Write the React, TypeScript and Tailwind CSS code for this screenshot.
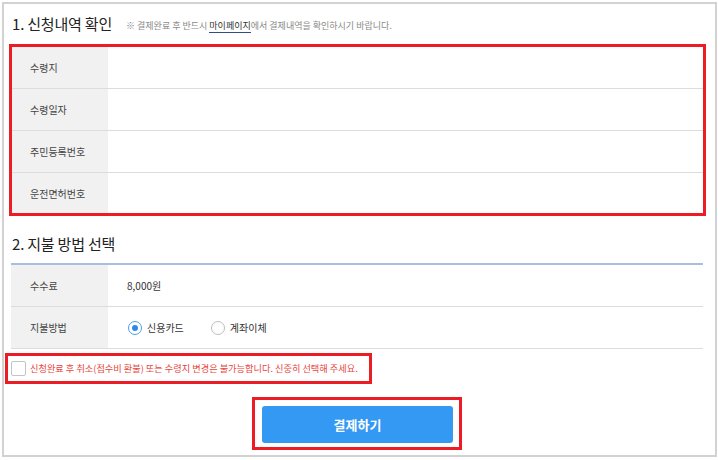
import React from "react";

const infoRows = [
    { label: "수령지", h: "h-[41px]" },
    { label: "수령일자", h: "h-[42px]" },
    { label: "주민등록번호", h: "h-[42px]" },
    { label: "운전면허번호", h: "h-[41px]" },
];

const App = () => {
    return <div className="bg-white w-[718px] h-[460px] pt-[2px] pl-[2px] font-['Noto_Sans_CJK_KR','Noto_Sans',sans-serif]">
        <div className="w-[715px] h-[455px] border-2 border-[#d2d2d2] pl-[7px] pr-[12px]">
            {/* 1. 신청내역 확인 */}
            <div className="flex items-center h-[40px] pt-[1px]">
                <h3 className="text-[15px] font-normal text-[#222] tracking-[-0.2px] ml-[1px]">1. 신청내역 확인</h3>
                <p className="ml-[14px] text-[9px] text-[#8a8a8a] mt-[2px]">
                    ※ 결제완료 후 반드시 <span className="text-[#333] border-b border-[#2f4d8a]">마이페이지</span>에서 결제내역을 확인하시기 바랍니다.
                </p>
            </div>
            <div className="ml-[-2px] mr-[-3px] border-[3px] border-[#ec1c24]">
                {infoRows.map((row, ind) => {
                    return <div key={ind} className={`flex ${row.h} ${ind > 0 ? "border-t border-[#dcdcdc]" : ""}`}>
                        <div className="w-[96px] bg-[#f1f1f1] flex items-center pl-[18px] text-[10px] text-[#444]">{row.label}</div>
                        <div className="flex-1"></div>
                    </div>
                })}
            </div>

            {/* 2. 지불 방법 선택 */}
            <div className="flex items-center h-[49px] pt-[9px] border-b-2 border-[#a9bfde]">
                <h3 className="text-[15px] font-normal text-[#222] tracking-[-0.2px] ml-[1px]">2. 지불 방법 선택</h3>
            </div>
            <div className="flex h-[42px] border-b border-[#dcdcdc]">
                <div className="w-[97px] bg-[#f1f1f1] flex items-center pl-[19px] text-[10px] text-[#444]">수수료</div>
                <div className="flex-1 flex items-center pl-[19px] text-[10px] text-[#333]">8,000원</div>
            </div>
            <div className="flex h-[42px] border-b border-[#dcdcdc]">
                <div className="w-[97px] bg-[#f1f1f1] flex items-center pl-[19px] text-[10px] text-[#444]">지불방법</div>
                <div className="flex-1 flex items-center pl-[20px] text-[10px] text-[#333]">
                    <label className="flex items-center">
                        <span className="w-[14px] h-[14px] shrink-0 rounded-full border border-[#4d9de8] flex items-center justify-center bg-white">
                            <span className="w-[6px] h-[6px] rounded-full bg-[#2d8ae8]"></span>
                        </span>
                        <span className="ml-[5px]">신용카드</span>
                    </label>
                    <label className="flex items-center ml-[27px]">
                        <span className="w-[14px] h-[14px] shrink-0 rounded-full border border-[#bdbdbd] bg-white"></span>
                        <span className="ml-[5px]">계좌이체</span>
                    </label>
                </div>
            </div>

            {/* 안내 */}
            <div className="mt-[4px] ml-[-6px] w-[367px] h-[31px] border-[3px] border-[#ec1c24] flex items-center pl-[3px]">
                <span className="w-[15px] h-[15px] shrink-0 border border-[#c4c4c4] bg-white rounded-[2px]"></span>
                <span className="ml-[4px] text-[9.2px] text-[#e8453c] whitespace-nowrap">신청완료 후 취소(접수비 환불) 또는 수령지 변경은 불가능합니다. 신중히 선택해 주세요.</span>
            </div>

            {/* 결제 버튼 */}
            <div className="flex justify-center mt-[13px]">
                <div className="border-[3px] border-[#ec1c24] pt-[6px] pb-[4px] pl-[7px] pr-[6px]">
                    <button className="w-[191px] h-[37px] rounded-[3px] bg-[#3399f3] text-white text-[13px] font-bold">결제하기</button>
                </div>
            </div>
        </div>
    </div>
};

export default App;
